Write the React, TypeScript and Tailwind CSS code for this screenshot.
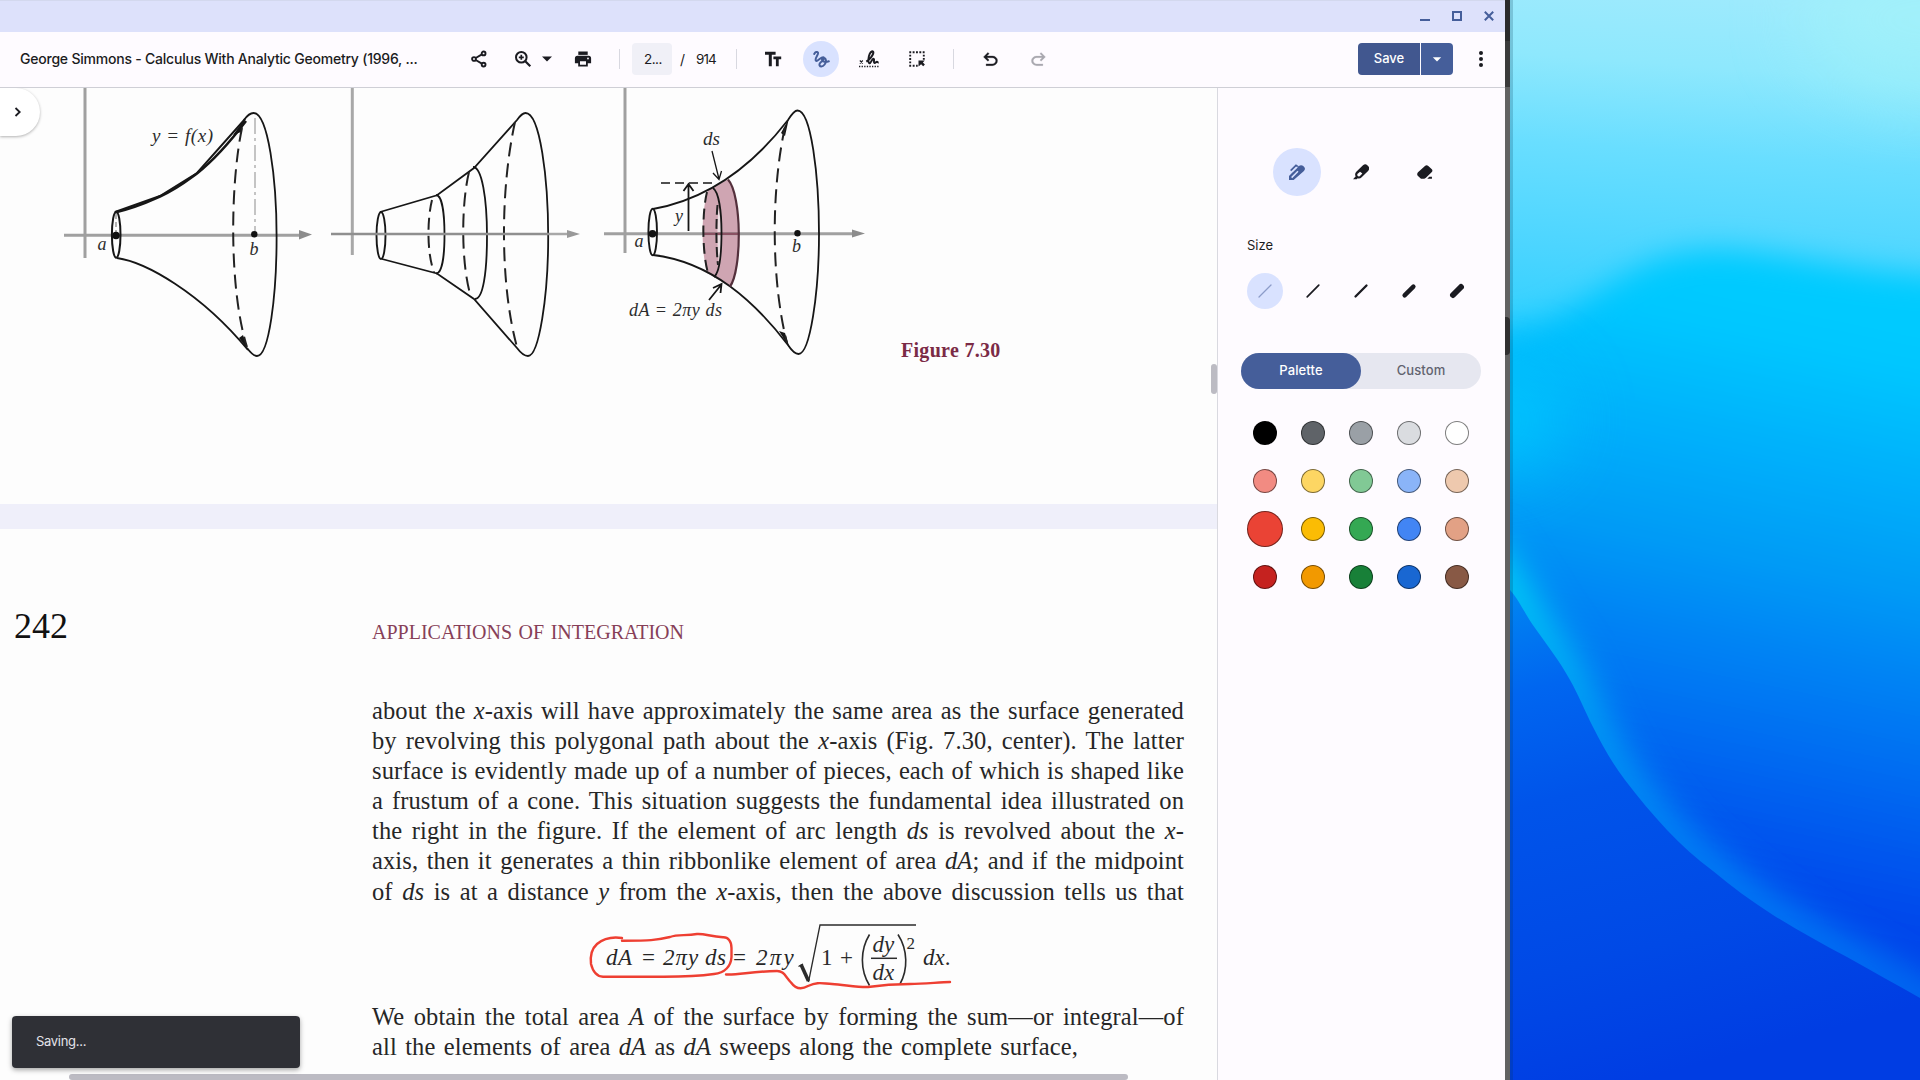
import React from "react";

const INK = "#1b1b21";
const ACCENT = "#455e9a";

function ToolButton({ children, active = false, label }: { children: React.ReactNode; active?: boolean; label: string }) {
  return (
    <button
      aria-label={label}
      className={
        active
          ? "flex size-9 shrink-0 items-center justify-center rounded-full bg-[#d9e2ff]"
          : "flex size-9 shrink-0 items-center justify-center rounded-full"
      }
    >
      {children}
    </button>
  );
}

function Separator() {
  return <div className="h-5 w-px shrink-0 bg-[#d8d8e0]" />;
}

function TitleBar() {
  return (
    <div className="flex h-8 shrink-0 items-start justify-end gap-[22px] border-t border-[#d3d8ee] bg-[#dde1fb] pr-[11px] pt-[10px]">
      <svg width="10" height="10" viewBox="0 0 10 10">
        <path d="M0 9h10" stroke={ACCENT} strokeWidth="2" />
      </svg>
      <svg width="10" height="10" viewBox="0 0 10 10">
        <rect x="1" y="1" width="8" height="8" fill="none" stroke={ACCENT} strokeWidth="2" />
      </svg>
      <svg width="10" height="10" viewBox="0 0 10 10">
        <path d="M.8.8l8.4 8.4M9.2.8L.8 9.2" stroke={ACCENT} strokeWidth="2" />
      </svg>
    </div>
  );
}

function Toolbar() {
  return (
    <div className="flex h-14 shrink-0 items-center border-b border-[#cfcfd6] bg-[#fefbff] pb-px pl-5 pr-[6px] font-['Inter'] text-[#1b1b21]">
      <h1 className="w-[441px] shrink-0 whitespace-nowrap text-[14px] font-medium leading-5 tracking-[-0.22px]">
        George Simmons - Calculus With Analytic Geometry (1996, ...
      </h1>
      <ToolButton label="Share">
        <svg width="16" height="18" viewBox="0 0 16 18" fill="none" stroke={INK} strokeWidth="1.9">
          <circle cx="12.6" cy="3.4" r="1.9" />
          <circle cx="3" cy="9" r="1.9" />
          <circle cx="12.6" cy="14.6" r="1.9" />
          <path d="M4.7 8l6.2-3.6M4.7 10l6.2 3.6" />
        </svg>
      </ToolButton>
      <div className="w-2" />
      <ToolButton label="Zoom">
        <svg width="18" height="18" viewBox="0 0 18 18" fill="none" stroke={INK} strokeWidth="2">
          <circle cx="7.3" cy="7.3" r="5.3" />
          <path d="M11.3 11.3l5 5" strokeWidth="2.2" />
          <path d="M7.3 4.8v5M4.8 7.3h5" strokeWidth="1.7" />
        </svg>
      </ToolButton>
      <svg width="12" height="6" viewBox="0 0 12 6" className="shrink-0">
        <path d="M1 .4h10L6 5.4z" fill={INK} />
      </svg>
      <div className="w-3" />
      <ToolButton label="Print">
        <svg width="18" height="18" viewBox="0 0 18 18">
          <path d="M4.3 1.5h9.4v3.4H4.3z" fill={INK} />
          <path
            d="M3.4 5.7h11.2a2.5 2.5 0 0 1 2.5 2.5v5.1h-3.3v3.2H4.2v-3.2H.9V8.200a2.500 2.500 0 0 1 2.500-2.500zM6 11.200v3.600h6v-3.600zM14 7.600a.9.900 0 1 0 0 1.800.9.900 0 0 0 0-1.800z"
            fill={INK}
            fillRule="evenodd"
          />
        </svg>
      </ToolButton>
      <div className="w-[18px]" />
      <Separator />
      <div className="ml-3 flex h-8 w-10 shrink-0 items-center rounded bg-[#f0f0f7] pl-3 text-[13.500px] tracking-[-0.500px]">2...</div>
      <span className="ml-2 w-[16px] text-[14px]">/</span>
      <span className="w-[40px] text-[13.500px] tracking-[-0.9px]">914</span>
      <Separator />
      <div className="w-[18px]" />
      <ToolButton label="Text">
        <svg width="18" height="18" viewBox="0 0 18 18" fill={INK}>
          <path d="M1 1.700h10.600v3H7.800v11.600H4.800V4.700H1z" />
          <path d="M9.400 6.500h7.800v2.700h-2.500v7.100h-2.800V9.200H9.400z" />
        </svg>
      </ToolButton>
      <div className="w-3" />
      <ToolButton label="Draw" active>
        <svg width="18" height="18" viewBox="0 0 18 18" fill="none" stroke={ACCENT} strokeWidth="2" strokeLinecap="round" strokeLinejoin="round">
          <path d="M2.200 3.900C3.300 2 5.300 1.300 6 2.600c.9 1.700-3.400 5.600-2.200 7.800 1.500 2.400 5.700-4.600 7.800-3.100 1.700 1.300-2.600 4.400-3.700 6-1 1.600-.2 3.200 1.400 3.200 2.300 0 5-3.200 4.600-6.300-.3-2.400-3-2.900-3.700-1.100-.9 2.300 2.800 3.500 6.600 2.200" />
        </svg>
      </ToolButton>
      <div className="w-3" />
      <ToolButton label="Signature">
        <svg width="20" height="18" viewBox="0 0 20 18" fill="none" stroke={INK}>
          <path d="M.8 10.500l3 3M3.800 10.500l-3 3" strokeWidth="1.100" />
          <path
            d="M7.300 11.600c3.700-2.200 7.600-7.300 7-9.500-.4-1.400-2.300-.9-3.600 1.800-1.500 3.200-1.900 9-.2 9.300 1.600.2 2.200-4.400 3.900-4.400 1.500.1-.3 4 1 4.200 1.300 0 1.700-1.200 2.600-1.300.5 0 .8.900 1.700.7"
            strokeWidth="2"
          />
          <path d="M0 16.500h19.500" strokeWidth="1.300" strokeDasharray="1.300 1.300" />
        </svg>
      </ToolButton>
      <div className="w-3" />
      <ToolButton label="Select">
        <svg width="18" height="18" viewBox="0 0 18 18" fill="none" stroke={INK} strokeWidth="1.900">
          <path d="M1.300 2.200h15.500" strokeDasharray="1.900 1.450" />
          <path d="M2.200 4.700v12.200M15.800 4.700v5" strokeDasharray="1.900 1.450" />
          <path d="M4.700 15.800h5" strokeDasharray="1.900 1.450" />
          <path d="M10.500 10.500h6.300l-1.900 2 2 2-1.700 1.700-2.100-2-2.600 2.400z" fill={INK} stroke="none" />
        </svg>
      </ToolButton>
      <div className="w-[18px]" />
      <Separator />
      <div className="w-[18px]" />
      <ToolButton label="Undo">
        <svg width="21" height="21" viewBox="0 -960 960 960" fill={INK} stroke={INK} strokeWidth="14">
          <path d="M280-200v-80h284q63 0 109.500-40T720-420q0-60-46.500-100T564-560H312l104 104-56 56-200-200 200-200 56 56-104 104h252q97 0 169.500 63T800-420q0 94-72.500 157T564-200H280Z" />
        </svg>
      </ToolButton>
      <div className="w-3" />
      <ToolButton label="Redo">
        <svg width="21" height="21" viewBox="0 -960 960 960" fill="#a9a8af" stroke="#a9a8af" strokeWidth="10">
          <path d="M396-200q-97 0-169.500-63T154-420q0-94 72.500-157T396-640h252L544-744l56-56 200 200-200 200-56-56 104-104H396q-63 0-109.500 40T240-420q0 60 46.500 100T396-280h284v80H396Z" />
        </svg>
      </ToolButton>
      <div className="flex-1" />
      <div className="flex h-8 shrink-0 gap-px">
        <button className="w-[62px] rounded-l bg-[#41578f] text-[13px] font-medium text-white">Save</button>
        <button aria-label="Save options" className="flex w-8 items-center justify-center rounded-r bg-[#455e9a]">
          <svg width="10" height="5" viewBox="0 0 10 5">
            <path d="M.8.200h8.400L5 4.600z" fill="#fff" />
          </svg>
        </button>
      </div>
      <button aria-label="More" className="ml-[10px] flex size-9 items-center justify-center">
        <svg width="4" height="16" viewBox="0 0 4 16" fill={INK}>
          <circle cx="2" cy="2" r="2" />
          <circle cx="2" cy="8" r="2" />
          <circle cx="2" cy="14" r="2" />
        </svg>
      </button>
    </div>
  );
}

function SurfaceFigures() {
  const axis = { stroke: "#a0a0a0", strokeWidth: 3, fill: "none" };
  const line = { stroke: "#161616", strokeWidth: 1.8, fill: "none" };
  const dash = { stroke: "#222", strokeWidth: 2, fill: "none", strokeDasharray: "14 7" };
  return (
    <svg
      width="900"
      height="300"
      viewBox="0 88 900 300"
      className="shrink-0 font-['Liberation_Serif','Times_New_Roman',serif] italic"
      fill="#2c2c2c"
    >
      {/* curve revolved about the x-axis */}
      <g>
        <path d="M85 86V258M64 235.300H303" {...axis} />
        <path d="M299 230l13 4.500-13 5z" fill="#8c8c8c" />
        <path d="M255 118V232" stroke="#c4c4c4" strokeWidth="2" strokeDasharray="16 4 3 4" />
        <ellipse cx="116.200" cy="234.700" rx="4.300" ry="23" {...line} strokeWidth="2" />
        <path d="M116 214v18" stroke="#999" strokeWidth="1.500" strokeDasharray="5 3" />
        <path d="M115 212L160 196 197 173 245 119" {...line} strokeWidth="1.900" />
        <path d="M115 212.500C138 207 150 201 160 196.500 177 189 188 180 197 173.500 214 160 230 142 246 121" {...line} strokeWidth="2.500" />
        <path d="M233 135L246 117 241 132z" fill="#161616" />
        <path d="M244 120Q249 113 253.500 113C268 113 276.600 178 276.600 237S269 356 257 356Q253 356 247 348" {...line} />
        <path d="M117 258C145 262 200 292 248 350" {...line} />
        <path d="M239 338L248 350 243 335z" fill="#161616" />
        <path d="M242 128C230 185 229 290 247 347" {...dash} />
        <circle cx="116" cy="235.500" r="3.800" fill="#111" />
        <circle cx="254.300" cy="234.300" r="3.200" fill="#111" />
        <text x="152" y="142" fontSize="19" textLength="61">y = f(x)</text>
        <text x="97.500" y="250" fontSize="18">a</text>
        <text x="249.500" y="254.500" fontSize="18">b</text>
      </g>
      {/* polygonal approximation: frustums of cones */}
      <g>
        <path d="M352.300 86V255" stroke="#a8a8a8" strokeWidth="3" />
        <path d="M549 234H570" stroke="#a8a8a8" strokeWidth="2.500" />
        <path d="M567 230l13 4-13 4z" fill="#999" />
        <ellipse cx="381" cy="235.500" rx="4.500" ry="23.500" {...line} strokeWidth="1.900" />
        <path d="M380 212L437 195.300 474 168 517 120Q522 113 525.500 113C540 113 548.200 178 548.200 237S539 356 528 356Q523 356 517 348L474 299 437 273.500 382 259" {...line} />
        <path d="M436 195C442 195 444.500 214 444.500 235S442 273.500 436 273.500" {...line} />
        <path d="M473 167C482 167 487 199 487 236S483 299 475 299" {...line} />
        <path d="M432 200C427 220 427 254 434 272" {...dash} strokeDasharray="12 6" />
        <path d="M469 172C461 205 461 265 471 297" {...dash} />
        <path d="M515 122C500 190 500 285 517 347" {...dash} />
        <path d="M331 234H549" stroke="#8f8f8f" strokeWidth="2.700" />
      </g>
      {/* ribbon element of area */}
      <g>
        <path d="M625 86V253" {...axis} />
        <path
          d="M708 190L727.500 179.500C740 186 742 272 730 286.500L714 277 707 273C701 250 701 212 708 190z"
          fill="#cfa5b2"
        />
        <path d="M718.500 208C722 225 722 247 719 264 717 250 717 222 718.500 208z" fill="#ecdfe3" />
        <path d="M604 233.700H857" {...axis} />
        <path d="M704 233.700H738" stroke="#8a5263" strokeWidth="2.500" />
        <path d="M852 229.500l13 4-13 4z" fill="#8c8c8c" />
        <ellipse cx="652.700" cy="232" rx="4.300" ry="23.300" {...line} strokeWidth="1.900" />
        <path d="M653 209C692 202 740 182 788 120Q794 110.500 797.500 110.500C811 110.500 819 175 819 234S810 354 798.500 354Q794 354 788 345C755 302 712 262 653 255" {...line} />
        <path d="M781 133L789 118 785 136zM779 331L790 349 785 333z" fill="#161616" />
        <path d="M785 127C771 190 771 280 787 343" {...dash} />
        <path d="M713 188C719 192 721.500 212 721.500 232S720 272 714 277" {...line} />
        <path d="M728 179.500C742 195 742 270 730 286.500" {...line} stroke="#54303c" strokeWidth="2.200" />
        <path d="M707 192C702 212 702 252 708 273" {...dash} strokeDasharray="11 6" />
        <path d="M717.500 205C716 222 716 248 718 265" {...dash} strokeDasharray="10 4" />
        <path d="M661 183H716" {...line} strokeDasharray="9 5" strokeWidth="1.500" />
        <path d="M688.500 231V185M683.500 191l5-7 5 7" {...line} />
        <path d="M712 151L719 179M713 173l6 6.500 2.500-8.500" {...line} strokeWidth="1.300" />
        <path d="M709 300L721 285M713 288l8.500-4-1 9" {...line} />
        <circle cx="652.500" cy="233.700" r="3.800" fill="#111" />
        <circle cx="797.500" cy="233.300" r="3.200" fill="#111" />
        <text x="703" y="145" fontSize="19" textLength="17">ds</text>
        <text x="675" y="222" fontSize="18">y</text>
        <text x="634.500" y="247" fontSize="18">a</text>
        <text x="792" y="251.500" fontSize="18">b</text>
        <text x="629" y="316" fontSize="18" textLength="93">dA = 2πy ds</text>
      </g>
    </svg>
  );
}

function Line({ children }: { children: React.ReactNode }) {
  return <span className="block h-[30.100px] whitespace-nowrap [text-align-last:justify]">{children}</span>;
}

function AreaFormula() {
  return (
    <div className="relative -ml-[5px] flex h-[94px] w-[600px] whitespace-nowrap pl-[239px] text-[23px] leading-[26px] tracking-normal">
      <span className="flex w-[127px] pt-[38px] italic">
        <span className="w-[36px] tracking-[0.600px]">dA</span>
        <span className="w-[21px] not-italic">=</span>
        <span className="w-[42px] tracking-[1px]">2πy</span>
        <span className="tracking-[0.600px]">ds</span>
      </span>
      <span className="flex w-[65px] pt-[38px]">
        <span className="w-[23px]">=</span>
        <span className="italic tracking-[2.300px]">2πy</span>
      </span>
      <svg width="118" height="64" viewBox="798 922 118 64" className="mt-[15px] shrink-0" fill="none" stroke="#2b2b2b">
        <path d="M798.500 966.500l4.500-2.500" strokeWidth="1.200" />
        <path d="M801 964.500L808.500 981" strokeWidth="3.600" />
        <path d="M808.500 982L820 925H916" strokeWidth="1.300" />
        <path d="M869.500 934.500C860 950 860 970 869.500 985.500M898 934.500C908 950 908 970 900 984" strokeWidth="1.600" />
        <path d="M871 958.300H897" strokeWidth="1.500" />
        <g fill="#2b2b2b" stroke="none" fontSize="23">
          <text x="821" y="964.500">1</text>
          <text x="840" y="964.500">+</text>
          <text x="872.500" y="952" fontStyle="italic">dy</text>
          <text x="872.500" y="980" fontStyle="italic">dx</text>
          <text x="906.500" y="949" fontSize="17">2</text>
        </g>
      </svg>
      <span className="pl-[7px] pt-[38px] italic">
        dx<span className="not-italic">.</span>
      </span>
      <svg
        width="370"
        height="64"
        viewBox="585 928 370 64"
        className="absolute left-[218px] top-[21px]"
        fill="none"
        stroke="#ee3f32"
        strokeWidth="2.400"
        strokeLinecap="round"
        strokeLinejoin="round"
      >
        <path d="M622 938C612 936.500 603 939 597 944 592 948.500 590 955 591 964 593 972 597 976.500 603 976.700H655C680 977 700 976 714 974 725 973 731 966 731.500 957V948C731.500 941 728 937 723 937.300 710 936.500 705 933.500 697 934 685 936 678 934 670 937 655 940.500 650 940.500 622 940.700" />
        <path d="M726 974.500C740 975 750 971.500 777 971 784 971 785 976 791 982.500 795 988 801 990 808 986 818 981.500 822 983.500 832 984 845 985 860 987.500 868 987 885 984.500 895 984 910 984 925 984 940 982 950 982" />
      </svg>
    </div>
  );
}

function Document() {
  return (
    <div className="relative h-[992px] w-[1217px] shrink-0 overflow-hidden bg-[#efeffa] font-['Liberation_Serif','Times_New_Roman',serif]">
      <section className="flex h-[416px] bg-[#fdfdfd]">
        <SurfaceFigures />
        <p className="mt-[251px] whitespace-nowrap pl-px text-[20px] font-bold leading-[22px] tracking-[0.300px] text-[#7b2b46]">Figure 7.30</p>
      </section>
      <section className="mt-[25px] flex h-[551px] bg-[#fdfdfd] text-[#262626]">
        <p className="w-[372px] shrink-0 pl-[14px] pt-[77px] text-[36px] leading-10 text-[#111]">242</p>
        <div className="w-[812px] shrink-0 pt-[92px] text-[24.500px] leading-[30.100px] tracking-[0.120px]">
          <h2 className="h-[75px] w-[312px] whitespace-nowrap text-[20px] leading-[22px] tracking-normal text-[#873f58] [text-align-last:justify]">
            APPLICATIONS OF INTEGRATION
          </h2>
          <p>
            <Line>about the <i>x</i>-axis will have approximately the same area as the surface generated</Line>
            <Line>by revolving this polygonal path about the <i>x</i>-axis (Fig. 7.30, center). The latter</Line>
            <Line>surface is evidently made up of a number of pieces, each of which is shaped like</Line>
            <Line>a frustum of a cone. This situation suggests the fundamental idea illustrated on</Line>
            <Line>the right in the figure. If the element of arc length <i>ds</i> is revolved about the <i>x</i>-</Line>
            <Line>axis, then it generates a thin ribbonlike element of area <i>dA</i>; and if the midpoint</Line>
            <Line>of <i>ds</i> is at a distance <i>y</i> from the <i>x</i>-axis, then the above discussion tells us that</Line>
          </p>
          <AreaFormula />
          <p className="pt-px">
            <Line>We obtain the total area <i>A</i> of the surface by forming the sum—or integral—of</Line>
            <span className="block w-[706px] whitespace-nowrap [text-align-last:justify]">
              all the elements of area <i>dA</i> as <i>dA</i> sweeps along the complete surface,
            </span>
          </p>
        </div>
      </section>

      <button
        aria-label="Expand sidebar"
        className="absolute left-0 top-0 flex h-12 w-10 items-center rounded-r-full bg-white pl-[14px] shadow-[0_1px_3px_rgba(0,0,0,0.3)]"
      >
        <svg width="8" height="10" viewBox="0 0 8 10">
          <path d="M1.500 1l4.200 4-4.200 4" fill="none" stroke={INK} strokeWidth="1.800" />
        </svg>
      </button>
      <div className="absolute right-0 top-[276px] h-[30px] w-[6px] rounded-full bg-[#bcbbc3]" />
      <div className="absolute bottom-0 left-[69px] h-[6px] w-[1059px] rounded-full bg-[#bcbbc3]" />
      <div className="absolute bottom-3 left-3 flex h-[52px] w-72 items-center rounded bg-[#2f3036] pl-6 font-['Inter'] text-[13px] tracking-[-0.300px] text-[#e4e2e9] shadow-[0_2px_5px_rgba(0,0,0,0.35)]">
        Saving...
      </div>
    </div>
  );
}

const SWATCHES: { color: string; selected?: boolean }[] = [
  { color: "#000000" }, { color: "#5f6368" }, { color: "#9aa0a6" }, { color: "#dadce0" }, { color: "#ffffff" },
  { color: "#f28b82" }, { color: "#fdd663" }, { color: "#81c995" }, { color: "#8ab4f8" }, { color: "#eec9ae" },
  { color: "#ea4335", selected: true }, { color: "#fbbc04" }, { color: "#34a853" }, { color: "#4285f4" }, { color: "#e2a185" },
  { color: "#c5221f" }, { color: "#f29900" }, { color: "#188038" }, { color: "#1967d2" }, { color: "#885945" },
];

const STROKES = [
  { width: 1.3, path: "M3 15L15 3" },
  { width: 1.7, path: "M3.200 14.800L14.800 3.200" },
  { width: 2.300, path: "M3.500 14.500L14.500 3.500" },
  { width: 4.400, path: "M4.600 13.400L13.400 4.600" },
  { width: 5.900, path: "M5 13L13 5" },
];

function DrawPanel() {
  return (
    <aside className="flex flex-1 flex-col border-l border-[#d9d9e0] bg-[#fefbff] pl-[23px] font-['Inter']">
      <div className="ml-8 mt-[60px] flex gap-4">
        <button aria-label="Pen" className="flex size-12 items-center justify-center rounded-full bg-[#d9e2ff]">
          <svg width="16.300" height="16.300" viewBox="0 0 49 49">
            <path d="M0 49V36L29 7q6-6 13-2l3 3q6 6 0 13L13 49z" fill={ACCENT} />
            <path d="M8 41L27 22" stroke="#d9e2ff" strokeWidth="4.500" />
            <path d="M5 20L21 4l7 5" fill="none" stroke={ACCENT} strokeWidth="5" />
            <path d="M12 22L26 9" stroke="#d9e2ff" strokeWidth="2.500" />
          </svg>
        </button>
        <button aria-label="Highlighter" className="flex size-12 items-center justify-center">
          <svg width="16.700" height="15.600" viewBox="0 0 50 47">
            <path d="M0 46L8 37Q4 31 9 24L30 4q7-6 13 0l3 3q6 6 0 13L26 40q-5 5-12 3l-3 3z" fill={INK} />
            <path d="M13 30l8-7 7 6-8 8q-4 1-6-1-2-3-1-6z" fill="#fefbff" />
          </svg>
        </button>
        <button aria-label="Eraser" className="flex size-12 items-center justify-center">
          <svg width="15.600" height="14" viewBox="0 0 47 42" fill={INK}>
            <path d="M3 22L24 3q5-5 10 0l10 9q5 5 0 10L27 38q-3 3-6 3h-9l-9-8q-5-5 0-11z" />
            <path d="M31 41l6-6h8v6z" />
          </svg>
        </button>
      </div>
      <h2 className="ml-[6px] mt-[39px] text-[13px] leading-5 text-[#1b1b21]">Size</h2>
      <div className="ml-[6px] mt-[18px] flex gap-3">
        {STROKES.map(({ width, path }, i) => (
          <ToolButton key={width} label={"Size " + (i + 1)} active={i === 0}>
            <svg width="18" height="18" viewBox="0 0 18 18">
              <path d={path} stroke={i === 0 ? "#8c9cc9" : INK} strokeWidth={width} strokeLinecap="round" />
            </svg>
          </ToolButton>
        ))}
      </div>
      <div className="mt-11 flex h-9 w-60 rounded-full bg-[#e6e7f0] text-[13px] font-medium tracking-[0.100px]">
        <button className="w-[120px] rounded-full bg-[#455e9a] text-white">Palette</button>
        <button className="w-[120px] text-[#61636f]">Custom</button>
      </div>
      <div className="mt-5 grid w-60 grid-cols-5">
        {SWATCHES.map(({ color, selected }) => (
          <button key={color} aria-label={color} className="flex h-12 items-center justify-center">
            <span
              className={selected ? "size-9 rounded-full border border-black/50" : "size-6 rounded-full border border-black/50"}
              style={{ backgroundColor: color }}
            />
          </button>
        ))}
      </div>
    </aside>
  );
}

function Wallpaper() {
  const edge =
    "C1518 598 1526 616 1535 628 1547 645 1559 660 1570 680 1578 694 1584 709 1593 727 1602 745 1612 763 1625 780 1638 797 1652 814 1667 830 1681 845 1697 859 1713 871 1731 886 1751 901 1773 915 1797 930 1822 944 1847 957 1872 971 1897 985 1920 998";
  return (
    <svg width="410" height="1080" viewBox="1510 0 410 1080" className="shrink-0">
      <defs>
        <linearGradient id="sky" gradientUnits="userSpaceOnUse" x1="1740" y1="0" x2="1715" y2="345">
          <stop offset="0" stopColor="#9deafd" />
          <stop offset=".2" stopColor="#8ee8fd" />
          <stop offset=".45" stopColor="#69deff" />
          <stop offset=".75" stopColor="#4cd5ff" />
          <stop offset="1" stopColor="#30d0ff" />
        </linearGradient>
        <linearGradient id="sea" gradientUnits="userSpaceOnUse" x1="1750" y1="250" x2="1620" y2="880">
          <stop offset="0" stopColor="#00ccff" />
          <stop offset=".12" stopColor="#00c8ff" />
          <stop offset=".3" stopColor="#00b0fb" />
          <stop offset=".46" stopColor="#009cf6" />
          <stop offset=".6" stopColor="#0084f4" />
          <stop offset=".75" stopColor="#006cf2" />
          <stop offset=".88" stopColor="#0056ee" />
          <stop offset="1" stopColor="#0044ea" />
        </linearGradient>
        <linearGradient id="deep" gradientUnits="userSpaceOnUse" x1="1510" y1="590" x2="1640" y2="1080">
          <stop offset="0" stopColor="#0086f2" />
          <stop offset=".2" stopColor="#0066f0" />
          <stop offset=".42" stopColor="#0054ea" />
          <stop offset=".75" stopColor="#0049e6" />
          <stop offset="1" stopColor="#003de3" />
        </linearGradient>
        <linearGradient id="rim" gradientUnits="userSpaceOnUse" x1="1510" y1="590" x2="1920" y2="998">
          <stop offset="0" stopColor="#00d0f6" />
          <stop offset=".25" stopColor="#00a2f5" />
          <stop offset=".5" stopColor="#0088f6" />
          <stop offset=".75" stopColor="#007cf6" />
          <stop offset="1" stopColor="#006cf2" />
        </linearGradient>
        <filter id="soft" x="-20%" y="-20%" width="140%" height="140%">
          <feGaussianBlur stdDeviation="15" />
        </filter>
        <filter id="glow" x="-20%" y="-20%" width="140%" height="140%">
          <feGaussianBlur stdDeviation="17" />
        </filter>
        <filter id="haze" x="-60%" y="-60%" width="220%" height="220%">
          <feGaussianBlur stdDeviation="35" />
        </filter>
      </defs>
      <rect x="1510" width="410" height="1080" fill="url(#sky)" />
      <ellipse cx="1930" cy="20" rx="130" ry="80" fill="#a6f6f8" opacity=".5" filter="url(#haze)" />
      <path
        d="M1450 334C1540 332 1560 316 1610 284 1650 258 1680 250 1720 250 1790 252 1850 276 1980 278V1200H1450z"
        fill="url(#sea)"
        filter="url(#soft)"
      />
      <ellipse cx="1500" cy="420" rx="65" ry="55" fill="#00ceff" opacity=".7" filter="url(#haze)" />
      <path d={"M1480 545L1510 590" + edge + "L1960 1020"} fill="none" stroke="url(#rim)" strokeWidth="36" filter="url(#glow)" />
      <path d={"M1510 590" + edge + "V1080H1510z"} fill="url(#deep)" />
      <rect x="1510" width="3" height="1080" fill="#003050" opacity=".2" />
    </svg>
  );
}

export default function App() {
  return (
    <div className="flex h-[1080px] w-[1920px] overflow-hidden bg-[#0050ea]">
      <main className="flex w-[1505px] shrink-0 flex-col bg-[#fefbff]">
        <TitleBar />
        <Toolbar />
        <div className="flex min-h-0 flex-1">
          <Document />
          <DrawPanel />
        </div>
      </main>
      <div className="flex w-[5px] shrink-0 flex-col bg-[#626262]">
        <div className="h-[41px] bg-[#2b2b2b]" />
        <div className="h-[46px] bg-[#3b3b3b]" />
        <div className="mt-[230px] h-[38px] rounded-r-sm bg-[#303030]" />
      </div>
      <Wallpaper />
    </div>
  );
}
